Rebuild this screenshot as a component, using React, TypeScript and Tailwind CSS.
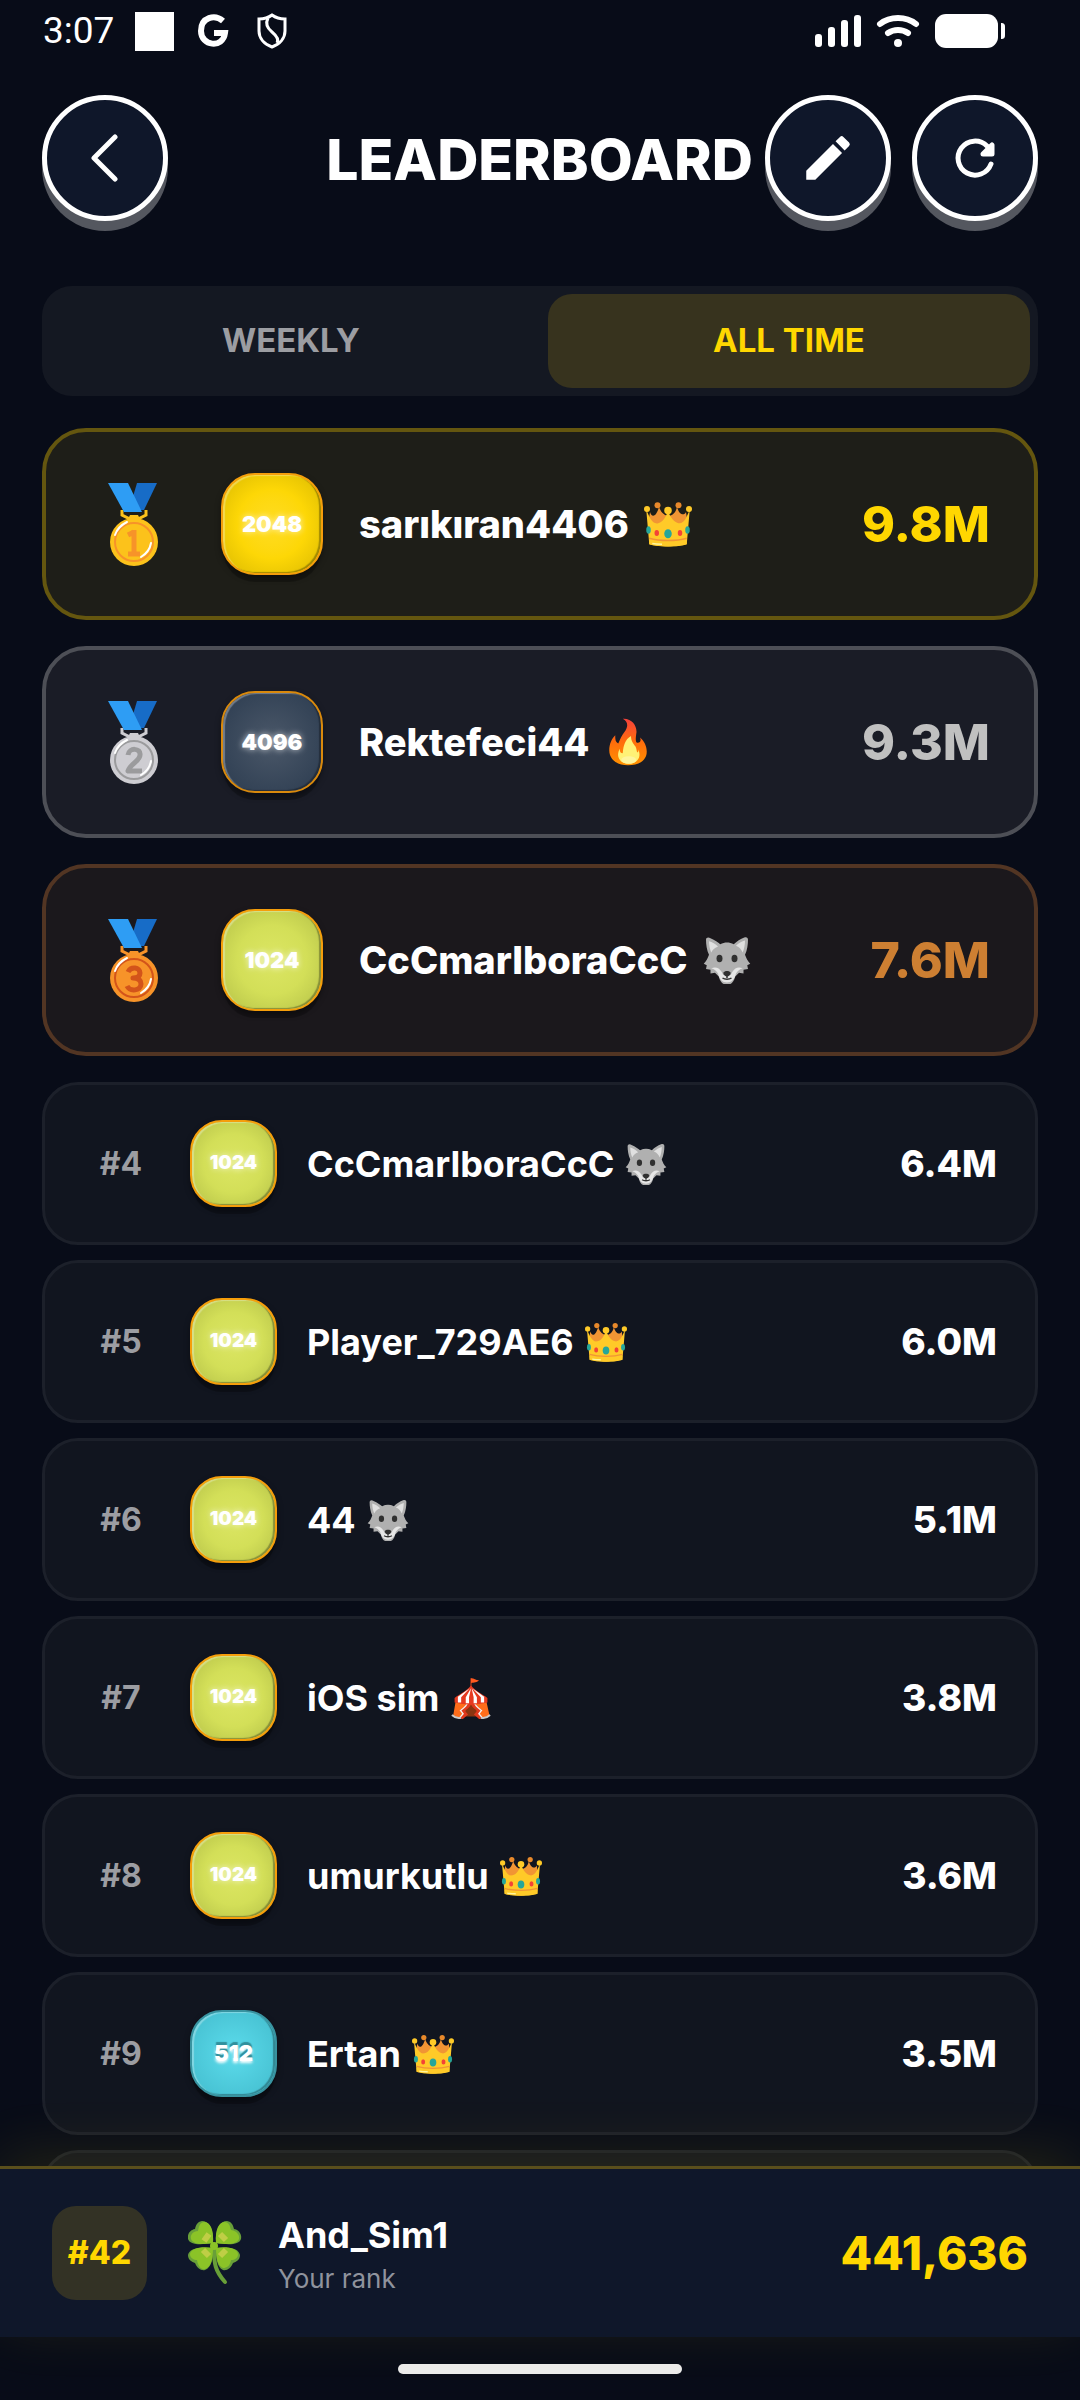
import { useState } from "react"

type Emoji = "crown" | "fire" | "wolf" | "tent"

interface Player {
  rank: number
  tile: number
  name: string
  emoji: Emoji
  score: string
}

const players: Player[] = [
  { rank: 1, tile: 2048, name: "sarıkıran4406", emoji: "crown", score: "9.8M" },
  { rank: 2, tile: 4096, name: "Rektefeci44", emoji: "fire", score: "9.3M" },
  { rank: 3, tile: 1024, name: "CcCmarlboraCcC", emoji: "wolf", score: "7.6M" },
  { rank: 4, tile: 1024, name: "CcCmarlboraCcC", emoji: "wolf", score: "6.4M" },
  { rank: 5, tile: 1024, name: "Player_729AE6", emoji: "crown", score: "6.0M" },
  { rank: 6, tile: 1024, name: "44", emoji: "wolf", score: "5.1M" },
  { rank: 7, tile: 1024, name: "iOS sim", emoji: "tent", score: "3.8M" },
  { rank: 8, tile: 1024, name: "umurkutlu", emoji: "crown", score: "3.6M" },
  { rank: 9, tile: 512, name: "Ertan", emoji: "crown", score: "3.5M" },
]

const podiumStyles: Record<number, { card: string; score: string }> = {
  1: { card: "border-[#64560f] bg-[#1e1e18]", score: "text-[#ffd700]" },
  2: { card: "border-[#4d4f56] bg-[#1a1c26]", score: "text-[#c0c0c0]" },
  3: { card: "border-[#523523] bg-[#1b181c]", score: "text-[#cd7f32]" },
}

const tileStyles: Record<number, string> = {
  512: "border-[#3893a0] bg-radial from-[#5cdcec] to-[#42bccd]",
  1024: "border-[#f59e0b] bg-radial from-[#dce663] via-[#d3df58] to-[#b5c148]",
  2048: "border-[#f59e0b] bg-radial from-[#ffdc20] via-[#fdd706] to-[#dab902]",
  4096: "border-[#d9890c] bg-radial from-[#4b5869] to-[#2c3c50]",
}

function Crown() {
  return (
    <>
      <path d="M7 28 9 15c2 7 8 8 12-7 5 16 21 16 24 0 3 12 10 12 12 7l2 14-10 17H14z" fill="#f19534" transform="translate(-1 1)" />
      <path d="M3 13c4 9 8 20 16 18 7-2 10-8 13-17 3 9 7 15 14 17 8 1 11-9 15-18l-4 46c-10 4-40 4-50 0z" fill="#ffca28" />
      <path d="M7 53c14 4 36 4 50 0v6c-14 4-36 4-50 0z" fill="#ffca28" />
      <path d="M7 51c14 4 36 4 50 0" fill="none" stroke="#f19534" strokeWidth="2" />
      <path d="M11 58c5 1 9 1 13 1" stroke="#fff59d" strokeWidth="2" fill="none" />
      <circle cx="4" cy="12" r="4" fill="#ffca28" />
      <circle cx="60" cy="12" r="4" fill="#ffca28" />
      <circle cx="18" cy="7" r="4" fill="#e8892b" />
      <circle cx="46" cy="7" r="4" fill="#e8892b" />
      <circle cx="32" cy="14" r="5" fill="#ffca28" />
      <ellipse cx="6" cy="40" rx="3" ry="5" fill="#26a69a" />
      <ellipse cx="58" cy="40" rx="3" ry="5" fill="#26a69a" />
      <ellipse cx="32" cy="45" rx="5" ry="6" fill="#26a69a" />
      <ellipse cx="17" cy="44" rx="3" ry="4" fill="#f44336" />
      <ellipse cx="48" cy="44" rx="3" ry="4" fill="#f44336" />
    </>
  )
}

function Fire() {
  return (
    <>
      <defs>
        <linearGradient id="flame" x1="0" y1="0" x2="0" y2="1">
          <stop offset="0" stopColor="#f5413b" />
          <stop offset="0.5" stopColor="#ff6d0c" />
          <stop offset="1" stopColor="#ff9100" />
        </linearGradient>
      </defs>
      <path d="M25 1c13-1 20 11 18 20-1 7-1 11 1 12 4 1 6-3 4-7 6 5 9 12 9 19 0 12-11 18-25 18S7 56 7 43c0-8 3-15 8-20 0 5 0 9 4 11 3-7 5-11 8-15 6-8 5-14-2-18z" fill="url(#flame)" />
      <path d="M36 24c0 7 3 10 6 14 2 4 1 7 3 8 1-1 1-3 0-5 6 10 0 20-12 20-11 0-18-9-12-20 0 4 1 6 4 6 1-11 3-18 11-23z" fill="#fff176" />
      <ellipse cx="33" cy="56" rx="10" ry="5" fill="#fff59d" />
    </>
  )
}

function Wolf() {
  return (
    <>
      <path d="M4 5C4 2 7 1 10 3c6 3 10 5 13 8 6-3 12-3 18 0 4-4 9-7 14-9 3-1 5 0 5 3 0 6-1 14-4 20 2 5 3 8 7 12l-4 2 1 5-6 1v5l-6-1-5 5c-2 8-6 11-11 11s-9-3-11-11l-5-5-6 1v-5l-6-1 1-5-4-2c4-4 5-7 7-12C5 19 4 11 4 5z" fill="#b0b0b0" />
      <path d="M8 7c4 1 9 4 12 7-5 2-7 4-9 8C9 17 8 12 8 7zM56 6c-4 1-9 4-12 7 5 2 7 5 9 9 2-5 3-11 3-16z" fill="#e0e0e0" />
      <path d="M11 43c6-2 10-1 14 5l2 4h10l2-4c4-6 8-7 14-5-4 1-7 4-9 7-2 8-6 12-12 12s-10-4-12-12c-2-3-5-6-9-7z" fill="#e6e6e6" />
      <ellipse cx="22" cy="30" rx="4" ry="5" fill="#303030" />
      <ellipse cx="42" cy="30" rx="4" ry="5" fill="#303030" />
      <path d="M27 49c2-3 8-3 10 0 0 3-3 5-5 5s-5-2-5-5z" fill="#303030" />
      <path d="M32 53v3m-6 0c3 2 9 2 12 0" stroke="#303030" strokeWidth="2" fill="none" />
    </>
  )
}

function Tent() {
  return (
    <>
      <path d="M32 2v14" stroke="#b33a1c" strokeWidth="2" />
      <path d="M32 2c5 0 7 3 12 3-2 3-8 4-12 4z" fill="#ff5a1f" />
      <path d="M9 35h46l5 23c-4 4-10 5-15 4L32 40 19 62c-5 1-11 0-14-4z" fill="#ff6d1a" />
      <path d="M25 38h14l3 22H22z" fill="#8a3410" />
      <path d="M32 36c-2 8-8 12-13 15l5 6-7 6M32 36c2 8 8 12 13 15l-5 6 7 6" fill="none" stroke="#e0381c" strokeWidth="5" />
      <path d="M27 39c-2 6-7 9-11 12l4 5-6 7M37 39c2 6 7 9 11 12l-4 5 6 7" fill="none" stroke="#f4f4f4" strokeWidth="2" />
      <path d="M32 13C25 22 16 25 7 32v7c16 4 34 4 50 0v-7C48 25 39 22 32 13z" fill="#e63a20" />
      <path d="M30 17 12 30v9h5v-8zM32 17l-8 14v9h5V31zM33 17l3 14v9h5v-9zM34 17l13 14v8h5v-9z" fill="#fff" />
      <path d="M3 58c4 4 9 5 14 4M61 58c-4 4-9 5-14 4" stroke="#c9c9c9" strokeWidth="3" fill="none" />
    </>
  )
}

const emojis = { crown: Crown, fire: Fire, wolf: Wolf, tent: Tent }

function EmojiIcon({ name, className }: { name: Emoji; className: string }) {
  const Glyph = emojis[name]
  return (
    <svg viewBox="0 0 64 64" className={`shrink-0 ${className}`} aria-hidden="true">
      <Glyph />
    </svg>
  )
}

const medalColors: Record<number, { base: string; ink: string }> = {
  1: { base: "#fcc21b", ink: "#f79329" },
  2: { base: "#cecdd2", ink: "#9b9b9d" },
  3: { base: "#f79329", ink: "#d3541a" },
}

const medalDigits: Record<number, string> = {
  1: "M26 48v24M20 72h12M20 53l6-3",
  2: "M20 55c1-8 13-7 12 0 0 6-10 9-12 16h14",
  3: "M20 54c3-6 12-5 12 1 0 4-3 5-7 5 5 0 8 2 8 6 0 7-11 8-14 2",
}

function Medal({ place }: { place: number }) {
  const { base, ink } = medalColors[place]
  return (
    <svg viewBox="0 0 50 84" className="h-[84px] w-[50px] shrink-0" role="img" aria-label={`Place ${place}`}>
      <path d="M29 1h20L36 28H21z" fill="#176cc7" />
      <path d="M14 28v5l10 5h4l10-5v-5" fill="none" stroke={base} strokeWidth="3" />
      <path d="M0 1h20l14 29H16z" fill="#2e9df4" />
      <path d="M22 33h8l3 6H19z" fill={base} />
      <circle cx="26" cy="60" r="24" fill={base} />
      <circle cx="26" cy="60" r="19" fill="none" stroke={ink} strokeWidth="2" />
      <path d={medalDigits[place]} fill="none" stroke={ink} strokeWidth="5" strokeLinejoin="round" />
      <path d="M7 53c2-6 6-10 12-13M33 75c5-3 9-8 10-14" fill="none" stroke="#fff" strokeWidth="2" strokeLinecap="round" />
    </svg>
  )
}

function Clover() {
  return (
    <svg viewBox="0 0 54 64" className="h-16 w-[54px] shrink-0" aria-hidden="true">
      <path d="M26 28c0 14 1 22 11 33" fill="none" stroke="#689f38" strokeWidth="4" strokeLinecap="round" />
      <g fill="#689f38">
        <path d="M25 22C26 8 21 0 14 0 9 1 8 4 7 8 1 9-1 15 0 18c2 6 12 6 25 4z" />
        <path d="M28 22C27 8 32 0 39 0c5 1 6 4 7 8 6 1 8 7 7 10-2 6-12 6-25 4z" />
        <path d="M25 27C10 25 1 28 0 34c0 5 4 7 7 8 2 5 6 8 10 7 7-3 8-11 8-22z" />
        <path d="M28 27c15-2 23 1 24 7 0 5-4 7-7 8-2 5-6 8-10 7-6-3-7-11-7-22z" />
      </g>
      <g fill="#8bc327">
        <path d="M25 22C26 8 22 1 16 1c-5 1-5 5-6 9-5 0-8 4-7 8 2 5 9 6 22 4z" />
        <path d="M28 22C27 8 31 1 37 1c5 1 5 5 6 8 6 1 9 5 8 9-2 5-10 6-23 4z" />
        <path d="M25 27C12 25 3 28 2 33c0 4 4 6 7 6 1 6 4 10 8 9 6-2 8-10 8-21z" />
        <path d="M28 27c13-2 21 1 22 6 0 4-3 6-7 6-1 6-4 8-8 8-5-2-7-9-7-20z" />
        <circle cx="26" cy="25" r="4" />
      </g>
      <path d="m16 20 5-7M32 13l6 6M15 29l6 6M32 35l6-6" stroke="#bfce45" strokeWidth="6" />
    </svg>
  )
}

function StatusBar() {
  return (
    <div className="flex h-[62px] shrink-0 items-center justify-between pr-[74px] pl-[43px]">
      <div className="flex items-center">
        <span className="w-[92px] font-[Roboto,sans-serif] text-[37px] leading-[40px]">3:07</span>
        <span className="h-[39px] w-[39px] bg-white" />
        <svg viewBox="0 0 32 34" className="ml-[23px] h-[34px] w-8" aria-hidden="true">
          <path d="M26 7C18 0 4 3 4 17c0 15 22 18 24 2H17" fill="none" stroke="#fff" strokeWidth="6" />
        </svg>
        <svg viewBox="0 0 30 36" className="ml-7 h-9 w-[30px]" fill="none" stroke="#fff" strokeWidth="3" aria-hidden="true">
          <path d="M15 2c4 3 8 4 13 4v12c0 7-5 13-13 16C7 31 2 25 2 18V6c5 0 9-1 13-4z" />
          <path d="M11 5c-3 6-1 10 4 14 6 5 7 8 5 11" />
        </svg>
      </div>
      <div className="flex items-center">
        <svg viewBox="0 0 46 34" className="h-[34px] w-[46px]" fill="#fff" aria-hidden="true">
          <rect x="0" y="20" width="7" height="13" rx="3" />
          <rect x="13" y="13" width="7" height="20" rx="3" />
          <rect x="26" y="6" width="7" height="27" rx="3" />
          <rect x="39" y="1" width="7" height="32" rx="3" />
        </svg>
        <svg viewBox="0 0 44 34" className="ml-[15px] h-[34px] w-11" fill="none" stroke="#fff" aria-hidden="true">
          <path d="M4 10C14 2 30 2 40 10" strokeWidth="6" strokeLinecap="round" />
          <path d="M12 19c6-4 14-4 20 0" strokeWidth="6" strokeLinecap="round" />
          <circle cx="22" cy="29" r="4" fill="#fff" stroke="none" />
        </svg>
        <svg viewBox="0 0 71 34" className="ml-[15px] h-[34px] w-[71px]" fill="#fff" aria-hidden="true">
          <rect width="63" height="34" rx="11" />
          <path d="M66 9c3 0 4 1 4 4v8c0 3-1 4-4 4z" />
        </svg>
      </div>
    </div>
  )
}

function RoundButton({ label, children }: { label: string; children: React.ReactNode }) {
  return (
    <button
      type="button"
      aria-label={label}
      className="flex size-[126px] shrink-0 items-center justify-center rounded-full border-[5px] border-white bg-[#0f172a] shadow-[0_10px_0_#54575f]"
    >
      {children}
    </button>
  )
}

function Header() {
  return (
    <header className="flex shrink-0 items-center px-[42px] pt-[33px]">
      <RoundButton label="Back">
        <svg viewBox="0 0 48 48" className="size-12" fill="none" stroke="#fff" strokeWidth="5" strokeLinecap="round" strokeLinejoin="round">
          <path d="M34 3 13 24l21 21" />
        </svg>
      </RoundButton>
      <h1 className="flex-1 pt-1 pr-3 text-right text-[57px] leading-[72px] font-extrabold">LEADERBOARD</h1>
      <div className="flex gap-[21px]">
        <RoundButton label="Edit name">
          <svg viewBox="0 0 24 24" className="size-[58px]" fill="#fff">
            <path d="M3 17.25V21h3.75L17.81 9.94l-3.75-3.75zM20.71 7.04a1 1 0 0 0 0-1.41l-2.34-2.34a1 1 0 0 0-1.41 0l-1.83 1.83 3.75 3.75z" />
          </svg>
        </RoundButton>
        <RoundButton label="Refresh">
          <svg viewBox="0 0 48 48" className="size-12" fill="none" stroke="#fff" strokeWidth="5" strokeLinecap="round" strokeLinejoin="round">
            <path d="M40 30a17 17 0 1 1-4-18l2 2" />
            <path d="M41 11v9h-9z" fill="#fff" />
          </svg>
        </RoundButton>
      </div>
    </header>
  )
}

function Tile({ value, size }: { value: number; size: "lg" | "sm" }) {
  const box = size === "lg" ? "size-[102px] rounded-[34px]" : "size-[87px] rounded-[32px]"
  const text = size === "lg" ? "text-[22px]" : value < 1000 ? "text-[22px]" : "text-[19px]"
  const glow =
    value === 512
      ? "[text-shadow:0_-3px_1px_#318f9c,0_2px_3px_#ffffff]"
      : "[text-shadow:0_0_6px_#ffffffb0]"

  return (
    <div
      className={`flex shrink-0 items-center justify-center border-2 font-black shadow-[0_9px_0_-2px_#0000003d,0_3px_6px_#00000060,inset_2px_1px_1px_#ffffff50,inset_-2px_-1px_1px_#00000050] ${box} ${text} ${glow} ${tileStyles[value]}`}
    >
      {value}
    </div>
  )
}

function PodiumRow({ player }: { player: Player }) {
  const styles = podiumStyles[player.rank]
  return (
    <li className={`mb-[11px] flex h-48 shrink-0 items-center rounded-[44px] border-4 pr-[44px] pl-[62px] ${styles.card}`}>
      <Medal place={player.rank} />
      <div className="ml-[63px]">
        <Tile value={player.tile} size="lg" />
      </div>
      <span className="ml-9 text-[38px] leading-[48px] font-extrabold">{player.name}</span>
      <EmojiIcon name={player.emoji} className="ml-[15px] size-12" />
      <span className={`ml-auto text-[50px] leading-[64px] font-extrabold ${styles.score}`}>{player.score}</span>
    </li>
  )
}

function Row({ player }: { player: Player }) {
  return (
    <li className="flex h-[163px] shrink-0 items-center rounded-[36px] border-[3px] border-[#1c202a] bg-[#11151f] pr-[38px] pl-[38px]">
      <span className="w-[76px] text-center text-[32px] leading-[40px] font-bold text-[#9c9da2]">#{player.rank}</span>
      <div className="ml-[31px]">
        <Tile value={player.tile} size="sm" />
      </div>
      <span className="ml-[30px] text-[36px] leading-[44px] font-bold">{player.name}</span>
      <EmojiIcon name={player.emoji} className="ml-[11px] size-[42px]" />
      <span className="ml-auto text-[37px] leading-[48px] font-extrabold">{player.score}</span>
    </li>
  )
}

function MyRank() {
  return (
    <footer className="relative flex h-[171px] shrink-0 items-center border-t-[3px] border-[#5a4f1c] bg-[#0f172a] px-[52px] shadow-[0_-12px_60px_#ffd7001c]">
      <div className="flex h-[94px] w-[95px] items-center justify-center rounded-[24px] bg-[#333225] text-[32px] font-extrabold text-[#ffd700]">
        #42
      </div>
      <div className="ml-[41px]">
        <Clover />
      </div>
      <div className="ml-9 pt-1">
        <p className="text-[36px] leading-[48px] font-bold">And_Sim1</p>
        <p className="text-[26px] leading-[40px] text-[#8f939d]">Your rank</p>
      </div>
      <span className="ml-auto text-[46px] leading-[56px] font-extrabold text-[#ffd700]">441,636</span>
    </footer>
  )
}

export default function App() {
  const [tab, setTab] = useState("ALL TIME")

  return (
    <div className="flex h-screen flex-col overflow-hidden bg-[#080c18] font-[Inter,sans-serif] text-white">
      <StatusBar />
      <Header />

      <div role="tablist" className="mx-[42px] mt-[65px] flex shrink-0 gap-4 rounded-[30px] bg-[#141822] p-2">
        {["WEEKLY", "ALL TIME"].map((name) => (
          <button
            key={name}
            type="button"
            role="tab"
            aria-selected={tab === name}
            onClick={() => setTab(name)}
            className={`h-[94px] flex-1 rounded-[24px] text-[33px] font-bold ${
              tab === name ? "bg-[#37331e] text-[#ffd700]" : "text-[#9c9da2]"
            }`}
          >
            {name}
          </button>
        ))}
      </div>

      <ul className="mt-8 flex min-h-0 flex-1 flex-col gap-[15px] overflow-hidden px-[42px]">
        {players.map((player) =>
          player.rank <= 3 ? (
            <PodiumRow key={player.rank} player={player} />
          ) : (
            <Row key={player.rank} player={player} />
          )
        )}
        {/* next page, still loading */}
        <li className="h-[163px] shrink-0 rounded-[36px] border-[3px] border-[#1c202a] bg-[#11151f]" />
      </ul>

      <MyRank />
      <div className="flex h-[63px] shrink-0 items-center justify-center">
        <div className="h-[10px] w-[284px] rounded-full bg-[#ebebeb]" />
      </div>
    </div>
  )
}
